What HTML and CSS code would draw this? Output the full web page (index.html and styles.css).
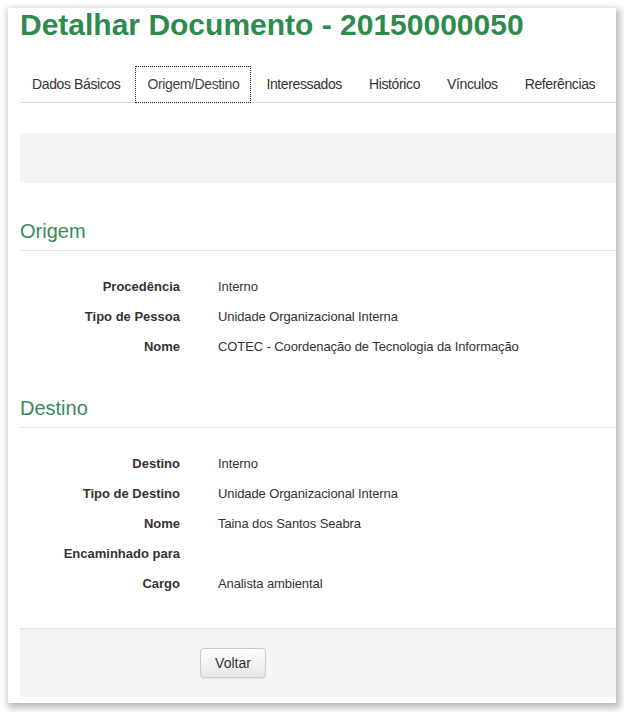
FILE: index.html
```html
<!DOCTYPE html>
<html lang="pt">
<head>
<meta charset="utf-8">
<link rel="stylesheet" href="styles.css">
</head>
<body>
<div class="window">
  <h1 class="title">Detalhar Documento - 20150000050</h1>
  <ul class="tabs">
    <li class="tab">Dados Básicos</li>
    <li class="tab active">Origem/Destino</li>
    <li class="tab">Interessados</li>
    <li class="tab">Histórico</li>
    <li class="tab">Vínculos</li>
    <li class="tab">Referências</li>
  </ul>
  <div class="well"></div>

  <h3 class="section first">Origem</h3>
  <div class="rows">
    <div class="row"><span class="label">Procedência</span><span class="value">Interno</span></div>
    <div class="row"><span class="label">Tipo de Pessoa</span><span class="value">Unidade Organizacional Interna</span></div>
    <div class="row"><span class="label">Nome</span><span class="value">COTEC - Coordenação de Tecnologia da Informação</span></div>
  </div>

  <h3 class="section">Destino</h3>
  <div class="rows">
    <div class="row"><span class="label">Destino</span><span class="value">Interno</span></div>
    <div class="row"><span class="label">Tipo de Destino</span><span class="value">Unidade Organizacional Interna</span></div>
    <div class="row"><span class="label">Nome</span><span class="value">Taina dos Santos Seabra</span></div>
    <div class="row"><span class="label">Encaminhado para</span><span class="value"></span></div>
    <div class="row"><span class="label">Cargo</span><span class="value">Analista ambiental</span></div>
  </div>

  <div class="footer">
    <button class="btn" type="button">Voltar</button>
  </div>
</div>
</body>
</html>
```

FILE: styles.css
```css
html, body {
  margin: 0;
  padding: 0;
  background: #ffffff;
}
body {
  font-family: "Liberation Sans", Arial, sans-serif;
  color: #333333;
  width: 624px;
  height: 712px;
  overflow: hidden;
}
.window {
  margin: 8px 0 0 8px;
  width: 596px;
  height: 695px;
  padding-left: 12px;
  background: #ffffff;
  box-shadow: 2px 3px 7px 2px rgba(0, 0, 0, 0.28);
  overflow: hidden;
  box-sizing: content-box;
}
.title {
  margin: 0;
  font-size: 30px;
  line-height: 34px;
  font-weight: bold;
  color: #2f8a4e;
}
.tabs {
  list-style: none;
  margin: 24px 0 0 0;
  padding: 0;
  display: flex;
  gap: 3px;
  border-bottom: 1px solid #dddddd;
  height: 36px;
}
.tab {
  font-size: 14px;
  line-height: 20px;
  letter-spacing: -0.38px;
  padding: 8px 12px;
  color: #333333;
  white-space: nowrap;
  margin-bottom: -1px;
  height: 20px;
}
.tab.active {
  outline: 1px dotted #222222;
  outline-offset: -1px;
  background: #ffffff;
  padding-bottom: 9px;
  color: #444444;
}
.well {
  margin-top: 30px;
  height: 50px;
  background: #f4f4f4;
  border-radius: 3px 0 0 3px;
}
.section {
  margin: 35px 0 0 0;
  font-size: 20px;
  line-height: 24px;
  font-weight: normal;
  color: #3a8a58;
  padding-bottom: 7px;
  border-bottom: 1px solid #e5e5e5;
}
.section.first {
  margin-top: 36px;
}
.rows {
  display: flex;
  flex-direction: column;
  margin-top: 20px;
}
.row {
  display: flex;
  height: 30px;
  align-items: center;
  font-size: 13px;
}
.label {
  width: 160px;
  text-align: right;
  font-weight: bold;
  color: #333333;
}
.value {
  margin-left: 38px;
  color: #333333;
  letter-spacing: -0.1px;
}
.footer {
  margin-top: 30px;
  border-top: 1px solid #e5e5e5;
  background: #f4f4f4;
  height: 49px;
  padding: 19px 0 0 180px;
}
.btn {
  font-family: "Liberation Sans", Arial, sans-serif;
  font-size: 14px;
  color: #333333;
  height: 30px;
  width: 66px;
  padding: 0;
  border: 1px solid #cccccc;
  border-radius: 4px;
  background: linear-gradient(#ffffff, #e6e6e6);
  box-shadow: 0 1px 1px rgba(0, 0, 0, 0.06);
}
```
